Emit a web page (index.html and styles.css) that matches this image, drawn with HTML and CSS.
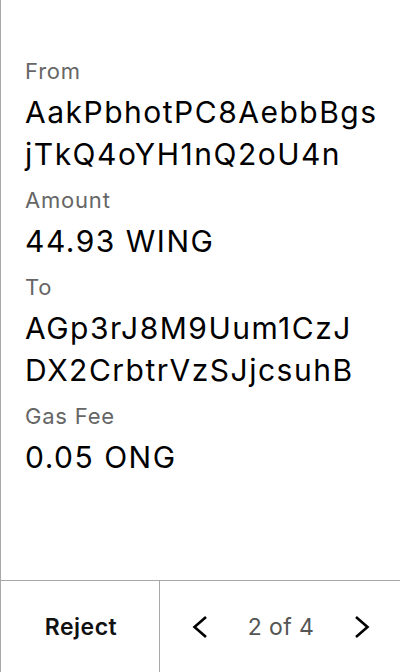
FILE: index.html
```html
<!DOCTYPE html>
<html>
<head>
<meta charset="utf-8">
<link rel="stylesheet" href="styles.css">
</head>
<body>
<div class="screen">
  <div class="content">
    <div class="label">From</div>
    <div class="value">AakPbhotPC8AebbBgs<wbr>jTkQ4oYH1nQ2oU4n</div>
    <div class="label">Amount</div>
    <div class="value">44.93 WING</div>
    <div class="label">To</div>
    <div class="value">AGp3rJ8M9Uum1CzJ<wbr>DX2CrbtrVzSJjcsuhB</div>
    <div class="label">Gas Fee</div>
    <div class="value">0.05 ONG</div>
  </div>
  <div class="footer">
    <div class="reject">Reject</div>
    <div class="pager">
      <svg class="chev" width="16" height="24" viewBox="0 0 16 24"><path d="M14 2 L2.5 12 L14 22" fill="none" stroke="#000" stroke-width="2.6"/></svg>
      <span class="count">2 of 4</span>
      <svg class="chev" width="16" height="24" viewBox="0 0 16 24"><path d="M2 2 L13.5 12 L2 22" fill="none" stroke="#000" stroke-width="2.6"/></svg>
    </div>
  </div>
</div>
</body>
</html>
```
FILE: styles.css
```css
* { box-sizing: border-box; }
html, body { margin: 0; padding: 0; background: #fff; }
body { font-family: Inter, "Noto Sans", sans-serif; }
.screen {
  width: 400px;
  height: 672px;
  border-left: 1px solid #a8a8a8;
  display: flex;
  flex-direction: column;
}
.content {
  flex: 1;
  padding: 56px 4px 0 24px;
}
.label {
  font-size: 22px;
  line-height: 30px;
  letter-spacing: 0.8px;
  color: #666;
  margin-bottom: 5px;
}
.value {
  font-size: 30px;
  line-height: 42px;
  letter-spacing: 1.5px;
  color: #000;
  margin-bottom: 10px;
  overflow-wrap: anywhere;
}
.footer {
  height: 92px;
  border-top: 1px solid #a8a8a8;
  display: flex;
}
.reject {
  width: 159px;
  border-right: 1px solid #a8a8a8;
  display: flex;
  align-items: center;
  justify-content: center;
  font-size: 23px;
  font-weight: 600;
  letter-spacing: 0.5px;
  color: #111;
  padding-left: 2px;
}
.pager {
  flex: 1;
  display: flex;
  align-items: center;
  justify-content: space-between;
  padding: 0 30px 0 32px;
}
.count {
  font-size: 23px;
  letter-spacing: 0.4px;
  color: #555;
}
```
